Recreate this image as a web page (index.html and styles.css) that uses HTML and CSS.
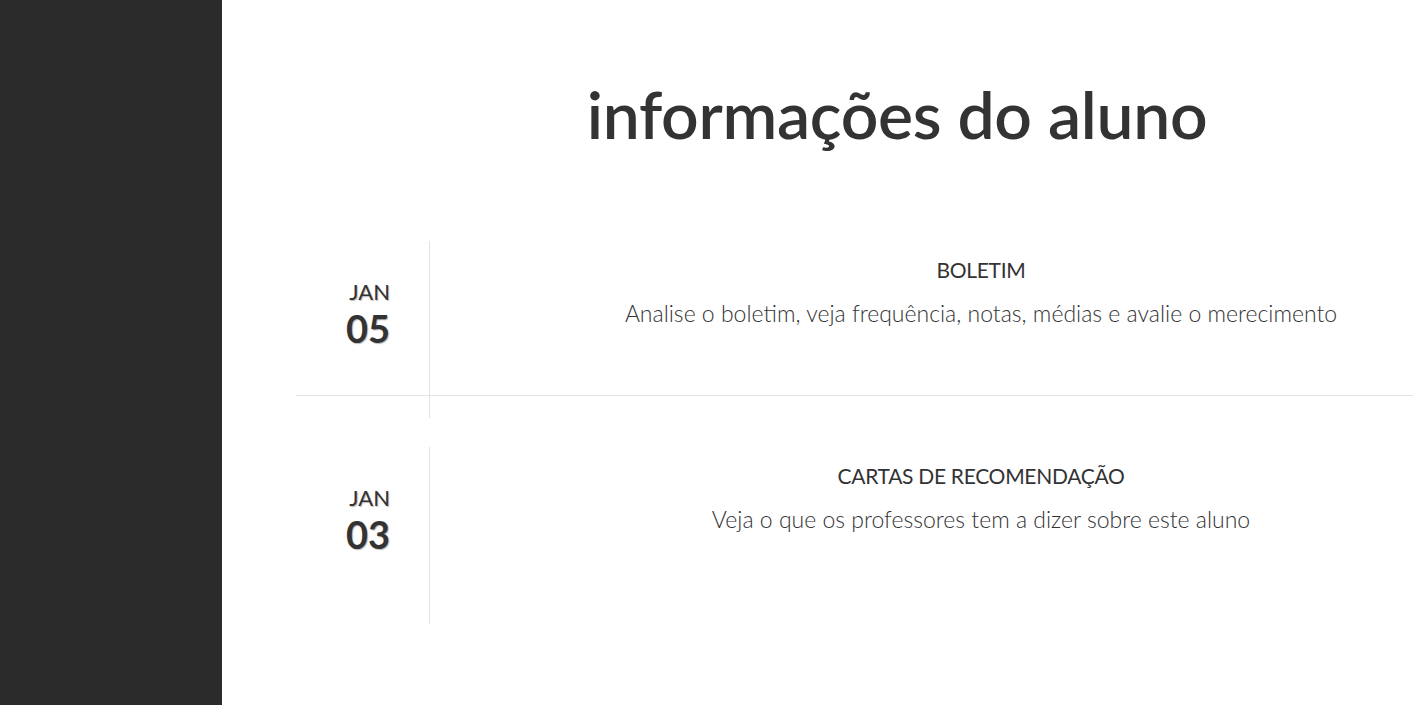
FILE: index.html
```html
<!DOCTYPE html>
<html lang="pt">
<head>
<meta charset="utf-8">
<title>informações do aluno</title>
<link rel="stylesheet" href="styles.css">
</head>
<body>
<div class="layout">
  <aside class="sidebar"></aside>
  <main class="main">
    <h1 class="title">informações do aluno</h1>
    <ul class="timeline">
      <li class="item">
        <div class="date">
          <span class="month">JAN</span>
          <span class="day">05</span>
        </div>
        <div class="content">
          <h2 class="heading">BOLETIM</h2>
          <p class="desc">Analise o boletim, veja frequência, notas, médias e avalie o merecimento</p>
        </div>
      </li>
      <li class="item">
        <div class="date">
          <span class="month">JAN</span>
          <span class="day">03</span>
        </div>
        <div class="content">
          <h2 class="heading">CARTAS DE RECOMENDAÇÃO</h2>
          <p class="desc">Veja o que os professores tem a dizer sobre este aluno</p>
        </div>
      </li>
    </ul>
  </main>
</div>
</body>
</html>
```
FILE: styles.css
```css
html, body {
  margin: 0;
  padding: 0;
  height: 100%;
  background: #fff;
  font-family: "Lato", "Open Sans", sans-serif;
  color: #333;
}
.layout {
  display: flex;
  min-height: 705px;
  overflow: hidden;
}
.sidebar {
  width: 222px;
  flex: 0 0 222px;
  background: #2b2b2b;
}
.main {
  flex: 1;
  min-width: 0;
}
.title {
  margin: 0;
  padding: 74px 0 0 159px;
  height: 92px;
  text-align: center;
  font-size: 66px;
  font-weight: 600;
  line-height: 80px;
  letter-spacing: -0.3px;
  color: #333;
}
.timeline {
  list-style: none;
  margin: 75px 0 0 74px;
  padding: 0;
}
.item {
  display: flex;
  height: 154px;
  border-bottom: 1px solid #e3e3e3;
  margin-bottom: 51px;
}
.item:last-child {
  border-bottom-color: transparent;
}
.date {
  flex: 0 0 94px;
  height: 140px;
  padding: 37px 39px 0 0;
  box-sizing: content-box;
  border-right: 1px solid #e3e3e3;
  display: flex;
  flex-direction: column;
  align-items: flex-end;
  text-shadow: 1px 1px 1px #bbb;
}
.month {
  font-size: 22px;
  line-height: 27px;
  font-weight: 400;
}
.day {
  font-size: 38px;
  line-height: 46px;
  font-weight: 700;
}
.content {
  flex: 1;
  padding: 14px 0 0 119px;
  text-align: center;
}
.heading {
  margin: 0;
  font-size: 21px;
  font-weight: 400;
  line-height: 30px;
  letter-spacing: -0.3px;
}
.desc {
  margin: 13px 0 0;
  font-size: 23px;
  font-weight: 300;
  line-height: 30px;
}
```
